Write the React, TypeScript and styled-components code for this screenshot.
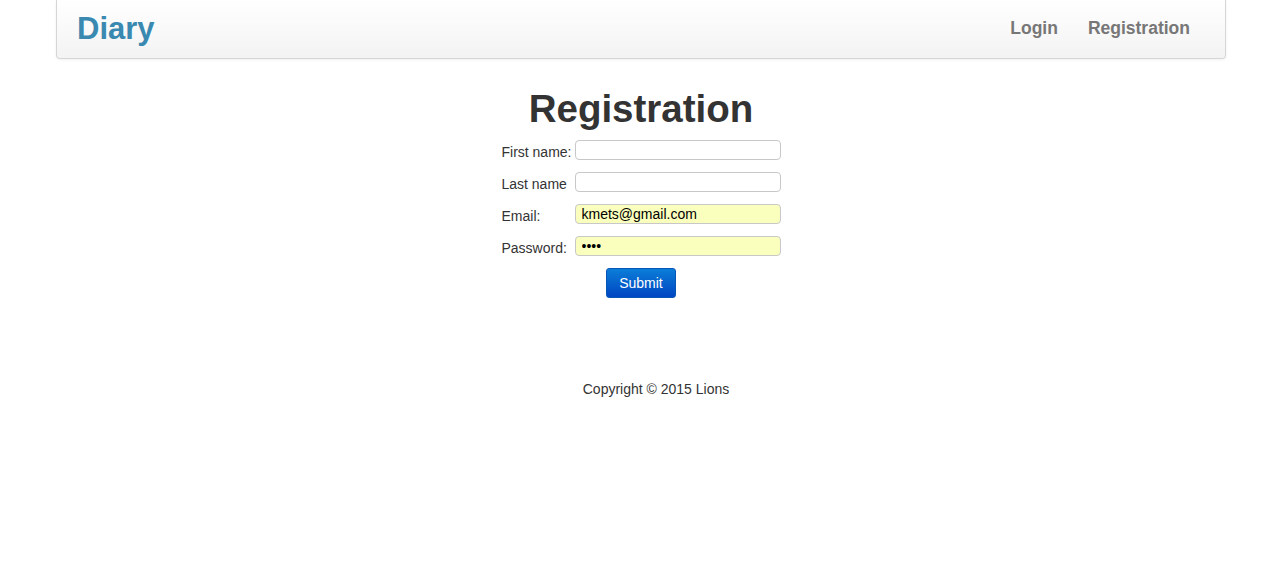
import React from "react";
import styled, { createGlobalStyle } from "styled-components";

const Global = createGlobalStyle`
  html, body { margin: 0; padding: 0; background: #fff; }
  body { font-family: "Liberation Sans", Arial, sans-serif; color: #333; font-size: 14px; }
`;

const Container = styled.div`
  width: 1170px;
  margin-left: 56px;
`;

const Navbar = styled.nav`
  height: 58px;
  display: flex;
  align-items: center;
  justify-content: space-between;
  padding: 0 35px 0 20px;
  background: linear-gradient(to bottom, #ffffff 0%, #f3f3f3 100%);
  border: 1px solid #d6d6d6;
  border-top: none;
  border-radius: 0 0 4px 4px;
  box-shadow: 0 1px 3px rgba(0, 0, 0, 0.06);
`;

const Brand = styled.a`
  font-size: 31px;
  font-weight: bold;
  color: #3a89b1;
  text-decoration: none;
  line-height: 1;
  margin-top: -2px;
`;

const NavLinks = styled.div`
  display: flex;
  gap: 30px;
  margin-top: -2px;
`;

const NavLink = styled.a`
  font-size: 17.5px;
  font-weight: bold;
  color: #777;
  text-decoration: none;
`;

const Main = styled.main`
  display: flex;
  flex-direction: column;
  align-items: center;
`;

const Title = styled.h1`
  font-size: 38.5px;
  font-weight: bold;
  color: #333;
  margin: 28px 0 0;
  line-height: 44px;
`;

const Form = styled.form`
  display: flex;
  flex-direction: column;
  align-items: center;
  margin-top: 3px;
`;

const Fields = styled.div`
  display: grid;
  grid-template-columns: auto 206px;
  grid-auto-rows: 32px;
  column-gap: 3px;
  align-items: center;
`;

const Label = styled.label`
  font-size: 14px;
  color: #333;
  padding-top: 4px;
`;

const Input = styled.input<{ $filled?: boolean }>`
  box-sizing: border-box;
  width: 206px;
  height: 20px;
  border: 1px solid #c8c8c8;
  border-radius: 4px;
  padding: 0 6px;
  font-family: "Liberation Sans", Arial, sans-serif;
  font-size: 14px;
  color: #000;
  background: ${(p) => (p.$filled ? "rgb(250, 255, 189)" : "#fff")};
  outline: none;
`;

const Submit = styled.button`
  margin-top: 6px;
  width: 70px;
  height: 30px;
  border: 1px solid #0656b8;
  border-radius: 3px;
  background: linear-gradient(to bottom, #0b7dd8 0%, #0046c2 100%);
  color: #fff;
  font-family: "Liberation Sans", Arial, sans-serif;
  font-size: 14px;
  cursor: pointer;
`;

const Footer = styled.footer`
  margin-top: 83px;
  padding-left: 30px;
  text-align: center;
  font-size: 14px;
  color: #333;
`;

export default function App() {
  return (
    <>
      <Global />
      <Container>
        <Navbar>
          <Brand href="#">Diary</Brand>
          <NavLinks>
            <NavLink href="#">Login</NavLink>
            <NavLink href="#">Registration</NavLink>
          </NavLinks>
        </Navbar>
        <Main>
          <Title>Registration</Title>
          <Form onSubmit={(e) => e.preventDefault()}>
            <Fields>
              <Label>First name:</Label>
              <Input type="text" />
              <Label>Last name</Label>
              <Input type="text" />
              <Label>Email:</Label>
              <Input type="text" $filled defaultValue="kmets@gmail.com" />
              <Label>Password:</Label>
              <Input type="password" $filled defaultValue="abcd" />
            </Fields>
            <Submit type="submit">Submit</Submit>
          </Form>
        </Main>
        <Footer>Copyright © 2015 Lions</Footer>
      </Container>
    </>
  );
}
